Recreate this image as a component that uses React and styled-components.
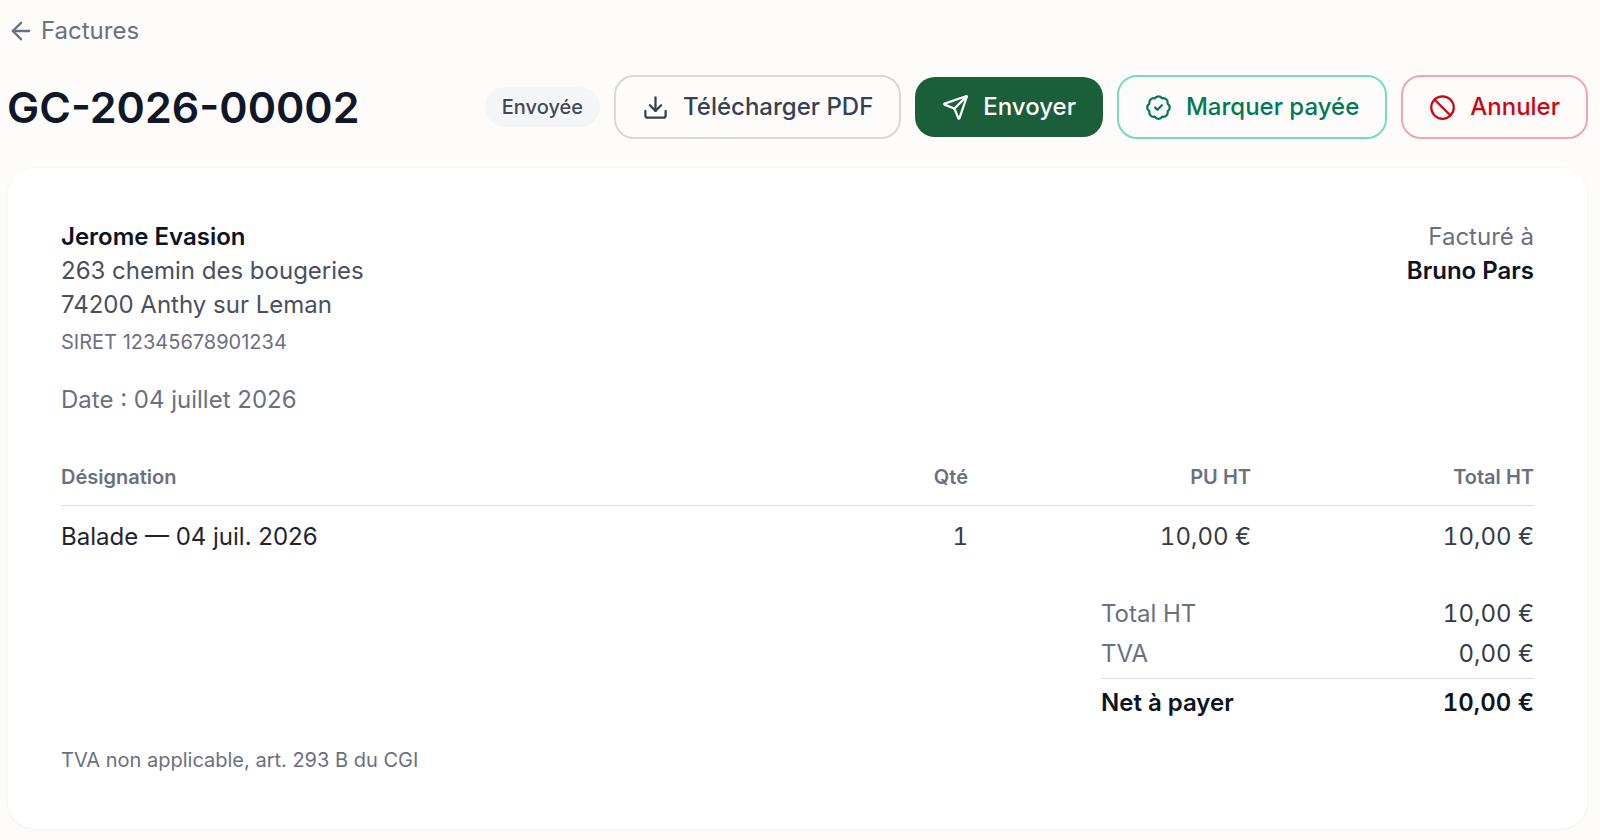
import React from "react";
import styled, { createGlobalStyle } from "styled-components";
import { ArrowLeft, BadgeCheck, Ban, Download, Send } from "lucide-react";

const GlobalStyle = createGlobalStyle`
  * {
    box-sizing: border-box;
    margin: 0;
  }

  body {
    background: #fdfcfb;
    color: #0c1322;
    font-family: Inter, "Liberation Sans", sans-serif;
    font-size: 24px;
    line-height: 34px;
  }
`;

const Page = styled.main`
  padding: 14px 12px 12px 7px;
`;

const BackLink = styled.a`
  display: inline-flex;
  align-items: center;
  gap: 6px;
  color: #6b7080;
  text-decoration: none;
`;

const Header = styled.header`
  display: flex;
  align-items: center;
  justify-content: space-between;
  gap: 14px;
  margin: 21px 0 28px;
`;

const Title = styled.h1`
  color: #101828;
  font-size: 43px;
  font-weight: 600;
  line-height: 52px;
`;

const Actions = styled.div`
  display: flex;
  align-items: center;
  gap: 14px;
`;

const Badge = styled.span`
  padding: 4px 17px;
  border-radius: 20px;
  background: #f3f5f7;
  color: #3f4957;
  font-size: 20px;
  font-weight: 500;
  line-height: 32px;
`;

const tones = {
  neutral: { color: "#364153", border: "#d7d8db" },
  success: { color: "#007a55", border: "#74deb8" },
  danger: { color: "#d0060f", border: "#f2a6a9" },
};

const Button = styled.button`
  display: inline-flex;
  align-items: center;
  gap: 14px;
  padding: 13px 26px;
  border: 2px solid ${({ $tone }) => tones[$tone].border};
  border-radius: 20px;
  background: transparent;
  color: ${({ $tone }) => tones[$tone].color};
  font: inherit;
  font-weight: 500;
  white-space: nowrap;
  cursor: pointer;
`;

const PrimaryButton = styled(Button)`
  padding: 13px 27px;
  border: 0;
  background: #1b5e3a;
  color: #fff;
`;

const Card = styled.section`
  padding: 52px 53px;
  border: 1px solid #f9f9f8;
  border-radius: 27px;
  background: #fff;
  box-shadow: 0 1px 2px rgba(0, 0, 0, 0.04);
`;

const Parties = styled.div`
  display: flex;
  justify-content: space-between;
`;

const Party = styled.address`
  color: #4a505d;
  font-style: normal;
  text-align: ${({ $align }) => $align || "left"};
`;

const Name = styled.p`
  color: #0c1322;
  font-weight: 600;
`;

const Muted = styled.p`
  color: #6b7080;
`;

const Small = styled.p`
  margin-top: 4px;
  color: #6b7080;
  font-size: 20px;
  line-height: 32px;
`;

const DateLine = styled(Muted)`
  margin-top: 25px;
`;

const Lines = styled.table`
  width: 100%;
  margin-top: 40px;
  border-collapse: collapse;
  table-layout: fixed;
`;

const HeadCell = styled.th`
  width: ${({ $width }) => $width};
  padding: 4px 0 12px;
  border-bottom: 1px solid #dcdee2;
  color: #6b7080;
  font-size: 20px;
  font-weight: 600;
  line-height: 32px;
  text-align: ${({ $align }) => $align || "right"};
`;

const Cell = styled.td`
  padding: 14px 0;
  color: ${({ $align }) => ($align ? "#1e2530" : "#363b46")};
  font-variant-numeric: ${({ $align }) => ($align ? "normal" : "tabular-nums")};
  text-align: ${({ $align }) => $align || "right"};
`;

const Totals = styled.dl`
  width: 433px;
  margin: 26px 0 0 auto;
`;

const TotalRow = styled.div`
  display: flex;
  justify-content: space-between;
  padding: 3px 0;
  color: #6b7080;

  dd {
    color: #363b46;
    font-variant-numeric: tabular-nums;
  }
`;

const NetRow = styled(TotalRow)`
  margin-top: 4px;
  padding-top: 7px;
  border-top: 1px solid #dcdee2;
  color: #0c1322;
  font-weight: 600;

  dd {
    color: #0c1322;
  }
`;

const Legal = styled(Small)`
  margin-top: 21px;
`;

const lines = [
  { label: "Balade — 04 juil. 2026", quantity: 1, price: "10,00 €", total: "10,00 €" },
];

const App = () => {
  return (
    <Page>
      <GlobalStyle />
      <BackLink href="#factures">
        <ArrowLeft size={28} />
        Factures
      </BackLink>
      <Header>
        <Title>GC-2026-00002</Title>
        <Actions>
          <Badge>Envoyée</Badge>
          <Button type="button" $tone="neutral">
            <Download size={27} />
            Télécharger PDF
          </Button>
          <PrimaryButton type="button" $tone="neutral">
            <Send size={27} />
            Envoyer
          </PrimaryButton>
          <Button type="button" $tone="success">
            <BadgeCheck size={27} />
            Marquer payée
          </Button>
          <Button type="button" $tone="danger">
            <Ban size={27} />
            Annuler
          </Button>
        </Actions>
      </Header>
      <Card>
        <Parties>
          <Party>
            <Name>Jerome Evasion</Name>
            <p>263 chemin des bougeries</p>
            <p>74200 Anthy sur Leman</p>
            <Small>SIRET 12345678901234</Small>
          </Party>
          <Party $align="right">
            <Muted>Facturé à</Muted>
            <Name>Bruno Pars</Name>
          </Party>
        </Parties>
        <DateLine>Date : 04 juillet 2026</DateLine>
        <Lines>
          <thead>
            <tr>
              <HeadCell scope="col" $align="left">Désignation</HeadCell>
              <HeadCell scope="col" $width="190px">Qté</HeadCell>
              <HeadCell scope="col" $width="283px">PU HT</HeadCell>
              <HeadCell scope="col" $width="283px">Total HT</HeadCell>
            </tr>
          </thead>
          <tbody>
            {lines.map((line) => (
              <tr key={line.label}>
                <Cell $align="left">{line.label}</Cell>
                <Cell>{line.quantity}</Cell>
                <Cell>{line.price}</Cell>
                <Cell>{line.total}</Cell>
              </tr>
            ))}
          </tbody>
        </Lines>
        <Totals>
          <TotalRow>
            <dt>Total HT</dt>
            <dd>10,00 €</dd>
          </TotalRow>
          <TotalRow>
            <dt>TVA</dt>
            <dd>0,00 €</dd>
          </TotalRow>
          <NetRow>
            <dt>Net à payer</dt>
            <dd>10,00 €</dd>
          </NetRow>
        </Totals>
        <Legal>TVA non applicable, art. 293 B du CGI</Legal>
      </Card>
    </Page>
  );
};

export default App;
